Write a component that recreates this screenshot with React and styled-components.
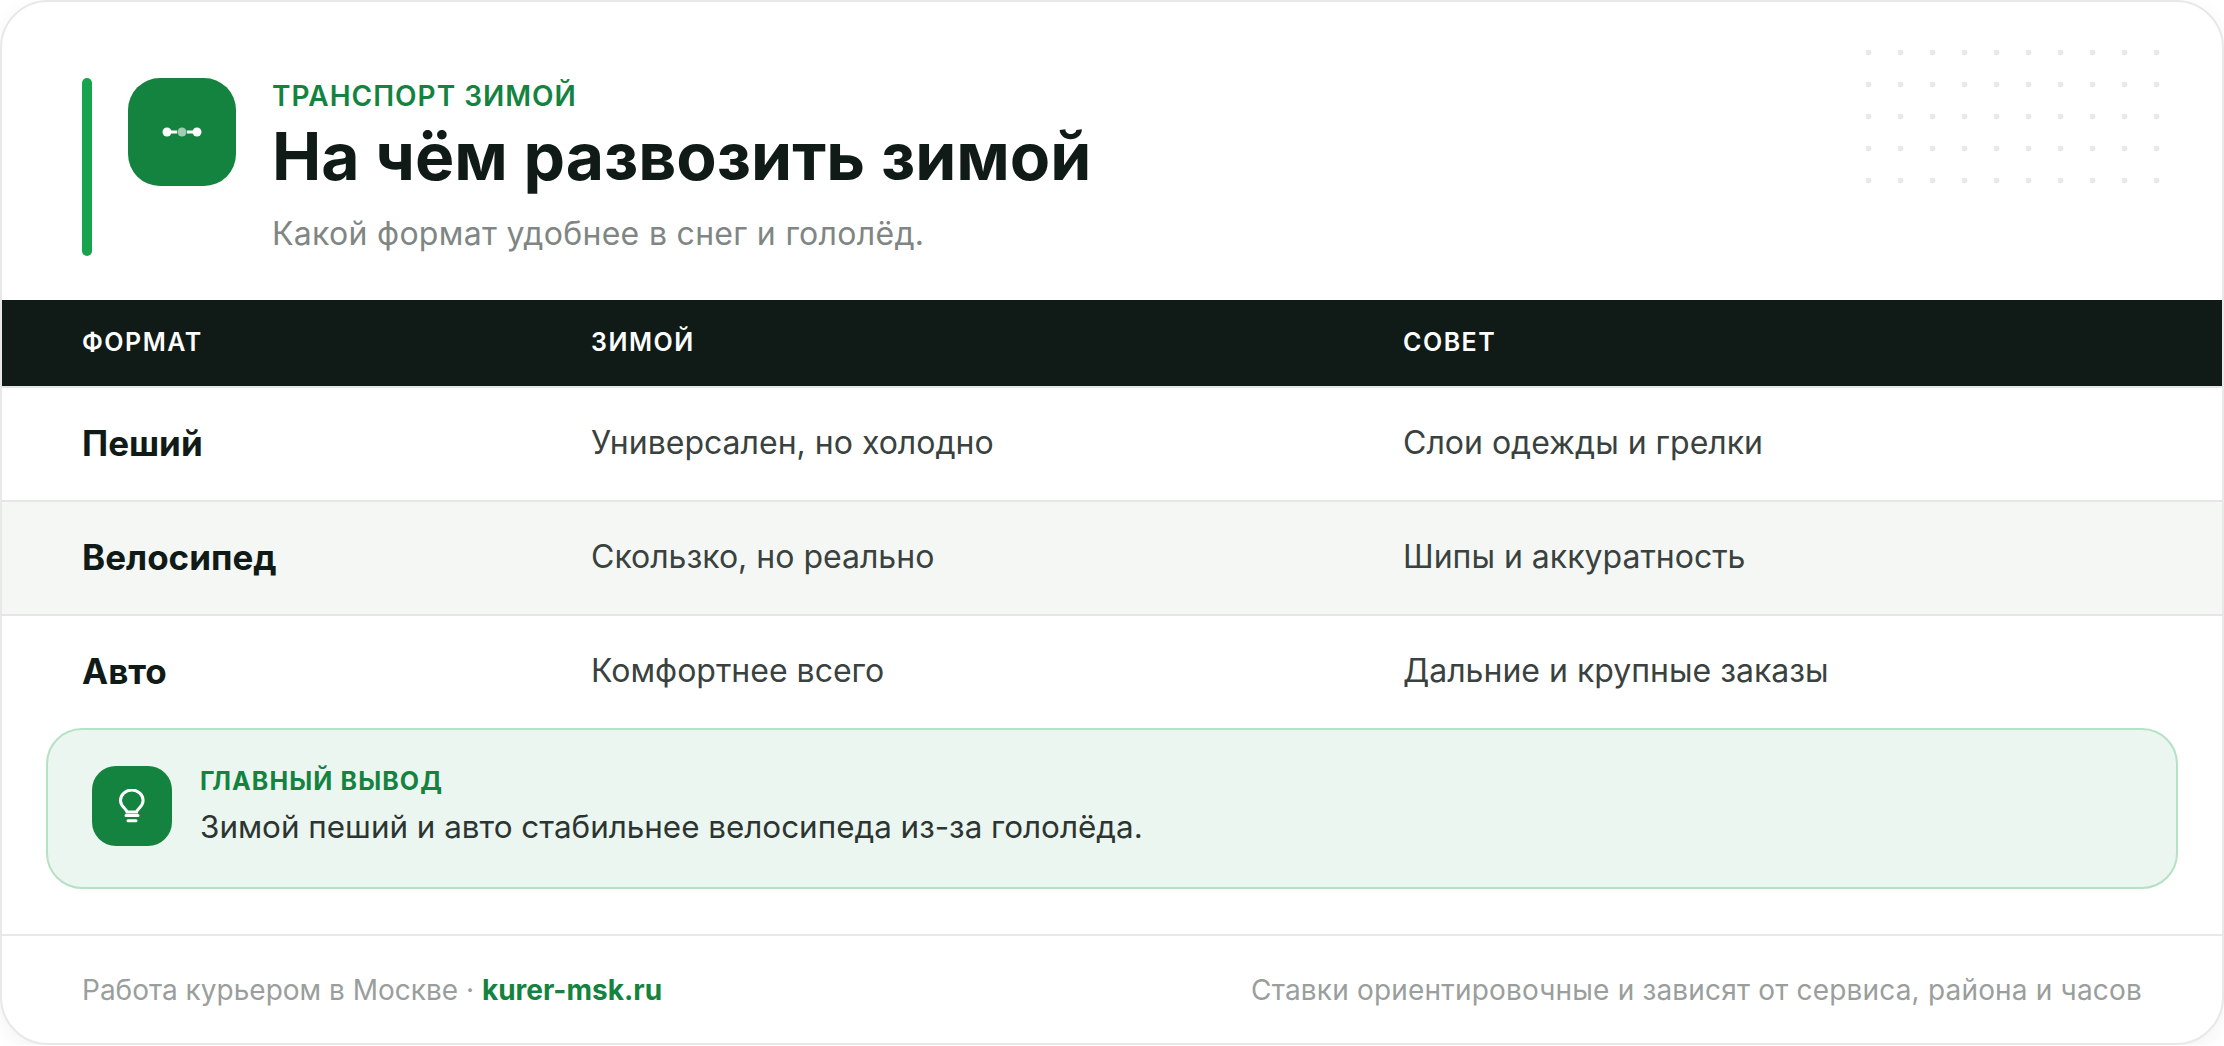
import React from 'react';
import styled, { createGlobalStyle } from 'styled-components';

const Global = createGlobalStyle`
  html, body { margin: 0; padding: 0; background: #ffffff; overflow: hidden; }
  body { font-family: Inter, "Noto Sans", sans-serif; }
  * { box-sizing: border-box; }
`;

const Card = styled.div`
  position: relative;
  width: 2224px;
  height: 1045px;
  background: #ffffff;
  border: 2px solid #e8e8e8;
  border-radius: 48px;
  box-shadow: 0 6px 20px rgba(0, 0, 0, 0.05);
  overflow: hidden;
  display: flex;
  flex-direction: column;
`;

const Dots = styled.div`
  position: absolute;
  left: 1864px;
  top: 48px;
  width: 320px;
  height: 160px;
  background-image: radial-gradient(circle at 2.5px 2.5px, #e9e9e9 2.8px, transparent 3.2px);
  background-size: 32px 32px;
`;

const Header = styled.header`
  height: 298px;
  padding: 76px 80px 0;
  display: flex;
  align-items: flex-start;
`;

const Accent = styled.div`
  width: 10px;
  height: 178px;
  border-radius: 5px;
  background: #18a44f;
  margin-right: 36px;
`;

const LogoTile = styled.div`
  width: 108px;
  height: 108px;
  border-radius: 32px;
  background: #14833f;
  display: flex;
  align-items: center;
  justify-content: center;
  margin-right: 36px;
`;

const HeadText = styled.div`
  display: flex;
  flex-direction: column;
`;

const Eyebrow = styled.div`
  font-size: 28px;
  line-height: 32px;
  font-weight: 600;
  letter-spacing: 1px;
  color: #14833f;
  margin-top: 2px;
`;

const Title = styled.h1`
  margin: 4px 0 0;
  font-size: 66px;
  line-height: 80px;
  font-weight: 700;
  color: #101b17;
`;

const Subtitle = styled.div`
  margin-top: 18px;
  font-size: 32px;
  line-height: 40px;
  letter-spacing: 0.3px;
  color: #7f8684;
`;

const HeadRow = styled.div`
  height: 88px;
  padding: 0 80px 2px;
  background: #101b17;
  border-bottom: 2px solid #e6e6e6;
  display: grid;
  grid-template-columns: 509px 812px 1fr;
  align-items: center;
  font-size: 25px;
  font-weight: 600;
  letter-spacing: 1.5px;
  color: #ffffff;
`;

const Row = styled.div`
  height: ${p => (p.$last ? 112 : 114)}px;
  padding: 0 80px 3px;
  display: grid;
  grid-template-columns: 509px 812px 1fr;
  align-items: center;
  font-size: 32px;
  color: #39423e;
  background: ${p => (p.$alt ? '#f5f7f5' : '#ffffff')};
  border-bottom: ${p => (p.$last ? 'none' : '2px solid #e6e6e6')};
`;

const Name = styled.div`
  font-size: 35px;
  font-weight: 700;
  color: #101b17;
`;

const Callout = styled.section`
  margin: 0 44px;
  height: 161px;
  border: 2px solid #b5e1c4;
  border-radius: 36px;
  background: #ecf6f0;
  padding: 36px 44px 0;
  display: flex;
  align-items: flex-start;
  gap: 28px;
`;

const BulbTile = styled.div`
  width: 80px;
  height: 80px;
  border-radius: 24px;
  background: #14833f;
  display: flex;
  align-items: center;
  justify-content: center;
`;

const CalloutBody = styled.div`
  display: flex;
  flex-direction: column;
  gap: 12px;
`;

const CalloutLabel = styled.div`
  font-size: 25px;
  line-height: 30px;
  font-weight: 700;
  letter-spacing: 1.1px;
  color: #14833f;
`;

const CalloutText = styled.div`
  font-size: 31.4px;
  line-height: 38px;
  color: #2c3531;
`;

const Footer = styled.footer`
  margin-top: 45px;
  flex: 1;
  border-top: 2px solid #e8e8e8;
  padding: 0 80px;
  display: flex;
  align-items: center;
  justify-content: space-between;
  font-size: 28px;
  color: #9a9e9c;
`;

const FooterNote = styled.div`
  letter-spacing: 0.18px;
`;

const Brand = styled.span`
  font-weight: 700;
  color: #14833f;
`;

const rows = [
  ['Пеший', 'Универсален, но холодно', 'Слои одежды и грелки'],
  ['Велосипед', 'Скользко, но реально', 'Шипы и аккуратность'],
  ['Авто', 'Комфортнее всего', 'Дальние и крупные заказы'],
];

export default function App() {
  return (
    <>
      <Global />
      <Card>
        <Dots />
        <Header>
          <Accent />
          <LogoTile>
            <svg width="40" height="12" viewBox="0 0 40 12">
              <path d="M8 6h7M25 6h7" stroke="#fff" strokeWidth="3" />
              <circle cx="5" cy="6" r="4.5" fill="#fff" />
              <circle cx="20" cy="6" r="4.5" fill="#fff" fillOpacity="0.6" />
              <circle cx="35" cy="6" r="4.5" fill="#fff" />
            </svg>
          </LogoTile>
          <HeadText>
            <Eyebrow>ТРАНСПОРТ ЗИМОЙ</Eyebrow>
            <Title>На чём развозить зимой</Title>
            <Subtitle>Какой формат удобнее в снег и гололёд.</Subtitle>
          </HeadText>
        </Header>
        <HeadRow>
          <div>ФОРМАТ</div>
          <div>ЗИМОЙ</div>
          <div>СОВЕТ</div>
        </HeadRow>
        {rows.map((r, i) => (
          <Row key={r[0]} $alt={i === 1} $last={i === 2}>
            <Name>{r[0]}</Name>
            <div>{r[1]}</div>
            <div>{r[2]}</div>
          </Row>
        ))}
        <Callout>
          <BulbTile>
            <svg width="28" height="34" viewBox="0 0 28 34" fill="none" stroke="#fff" strokeWidth="3" strokeLinecap="round">
              <path d="M9 23c-.5-3.5-6.5-5-6.5-11.5a11.3 10.5 0 0 1 22.6 0c0 6.5-6 8-6.5 11.5z" />
              <path d="M8 26.5h12M10 31.7h8" />
            </svg>
          </BulbTile>
          <CalloutBody>
            <CalloutLabel>ГЛАВНЫЙ ВЫВОД</CalloutLabel>
            <CalloutText>Зимой пеший и авто стабильнее велосипеда из-за гололёда.</CalloutText>
          </CalloutBody>
        </Callout>
        <Footer>
          <div>Работа курьером в Москве · <Brand>kurer-msk.ru</Brand></div>
          <FooterNote>Ставки ориентировочные и зависят от сервиса, района и часов</FooterNote>
        </Footer>
      </Card>
    </>
  );
}
